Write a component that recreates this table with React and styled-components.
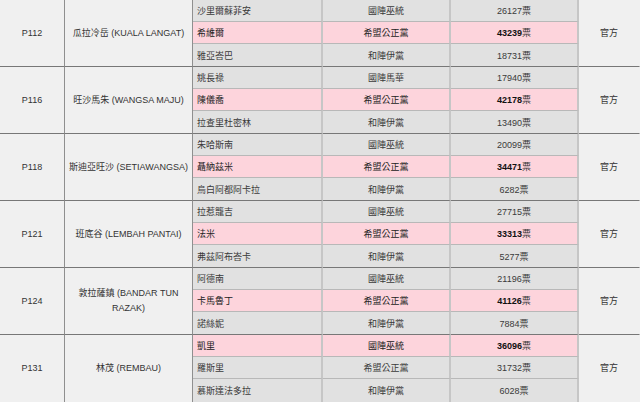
import React from "react";
import styled, { createGlobalStyle } from "styled-components";

const GlobalStyle = createGlobalStyle`
  html, body {
    margin: 0;
    padding: 0;
    background: #ffffff;
  }
  body {
    font-family: "Liberation Sans", "Noto Sans CJK TC", sans-serif;
    font-size: 9px;
    color: #333333;
  }
`;

const results = [
  {
    code: "P112",
    seat: "瓜拉冷岳 (KUALA LANGAT)",
    rows: [
      { name: "沙里爾蘇菲安", party: "國陣巫統", votes: 26127 },
      { name: "希維爾", party: "希盟公正黨", votes: 43239, win: true },
      { name: "雅亞峇巴", party: "和陣伊黨", votes: 18731 },
    ],
  },
  {
    code: "P116",
    seat: "旺沙馬朱 (WANGSA MAJU)",
    rows: [
      { name: "姚長祿", party: "國陣馬華", votes: 17940 },
      { name: "陳儀喬", party: "希盟公正黨", votes: 42178, win: true },
      { name: "拉查里杜密林", party: "和陣伊黨", votes: 13490 },
    ],
  },
  {
    code: "P118",
    seat: "斯迪亞旺沙 (SETIAWANGSA)",
    rows: [
      { name: "朱哈斯南", party: "國陣巫統", votes: 20099 },
      { name: "聶納茲米", party: "希盟公正黨", votes: 34471, win: true },
      { name: "烏白阿都阿卡拉", party: "和陣伊黨", votes: 6282 },
    ],
  },
  {
    code: "P121",
    seat: "班底谷 (LEMBAH PANTAI)",
    rows: [
      { name: "拉惹籠吉", party: "國陣巫統", votes: 27715 },
      { name: "法米", party: "希盟公正黨", votes: 33313, win: true },
      { name: "弗茲阿布峇卡", party: "和陣伊黨", votes: 5277 },
    ],
  },
  {
    code: "P124",
    seat: "敦拉薩鎮 (BANDAR TUN RAZAK)",
    rows: [
      { name: "阿德南", party: "國陣巫統", votes: 21196 },
      { name: "卡馬魯丁", party: "希盟公正黨", votes: 41126, win: true },
      { name: "諾絲妮", party: "和陣伊黨", votes: 7884 },
    ],
  },
  {
    code: "P131",
    seat: "林茂 (REMBAU)",
    rows: [
      { name: "凱里", party: "國陣巫統", votes: 36096, win: true },
      { name: "羅斯里", party: "希盟公正黨", votes: 31732 },
      { name: "慕斯達法多拉", party: "和陣伊黨", votes: 6028 },
    ],
  },
];

const Table = styled.table`
  width: 640px;
  table-layout: fixed;
  border-collapse: separate;
  border-spacing: 0;
  border-bottom: 1px solid #777777;
`;

const Col = styled.col`
  width: ${(p) => p.$w}px;
`;

const Row = styled.tr``;

// code / seat / source cells spanning the three candidate rows
const GroupCell = styled.td`
  box-sizing: border-box;
  background: #f0f0f0;
  text-align: center;
  vertical-align: middle;
  padding: 0 3px;
  line-height: 15px;
  border-top: ${(p) => (p.$first ? "none" : "1px solid #777777")};
  border-right: 1px solid ${(p) => (p.$last ? "#f0f0f0" : "#8f8f8f")};
`;

const Cell = styled.td`
  box-sizing: border-box;
  height: ${(p) => (p.$tall ? 23 : 22)}px;
  padding: 0 4px;
  background: ${(p) => (p.$win ? "#fdd4dc" : "#e1e1e1")};
  text-align: ${(p) => p.$align || "center"};
  vertical-align: middle;
  white-space: nowrap;
  color: ${(p) => (p.$win ? "#222222" : "#3a3a3a")};
  border-top: ${(p) => (p.$groupTop ? "1px solid #777777" : "none")};
  border-bottom: ${(p) => (p.$rowEnd ? "1px solid #b8b8b8" : "none")};
  border-right: 2px solid #c6c6c6;
`;

const Votes = styled.span`
  font-weight: ${(p) => (p.$win ? 700 : 400)};
  color: ${(p) => (p.$win ? "#111111" : "#3a3a3a")};
`;

const Unit = styled.span`
  font-weight: 400;
  color: #3a3a3a;
`;

export default function App() {
  return (
    <>
      <GlobalStyle />
      <Table>
        <colgroup>
          <Col $w={65} />
          <Col $w={128} />
          <Col $w={130} />
          <Col $w={128} />
          <Col $w={128} />
          <Col $w={61} />
        </colgroup>
        <tbody>
          {results.map((g, gi) =>
            g.rows.map((r, ri) => {
              const first = gi === 0;
              const groupTop = ri === 0 && !first;
              const tall = groupTop || (gi === results.length - 1 && ri === 2);
              const rowEnd = ri < 2;
              const cellProps = {
                $win: r.win,
                $tall: tall,
                $groupTop: groupTop,
                $rowEnd: rowEnd,
              };
              return (
                <Row key={g.code + ri}>
                  {ri === 0 && (
                    <>
                      <GroupCell rowSpan={3} $first={first}>
                        {g.code}
                      </GroupCell>
                      <GroupCell rowSpan={3} $first={first}>
                        {g.seat}
                      </GroupCell>
                    </>
                  )}
                  <Cell $align="left" {...cellProps}>
                    {r.name}
                  </Cell>
                  <Cell {...cellProps}>{r.party}</Cell>
                  <Cell {...cellProps}>
                    <Votes $win={r.win}>{r.votes}</Votes>
                    <Unit>票</Unit>
                  </Cell>
                  {ri === 0 && (
                    <GroupCell rowSpan={3} $first={first} $last>
                      官方
                    </GroupCell>
                  )}
                </Row>
              );
            })
          )}
        </tbody>
      </Table>
    </>
  );
}
